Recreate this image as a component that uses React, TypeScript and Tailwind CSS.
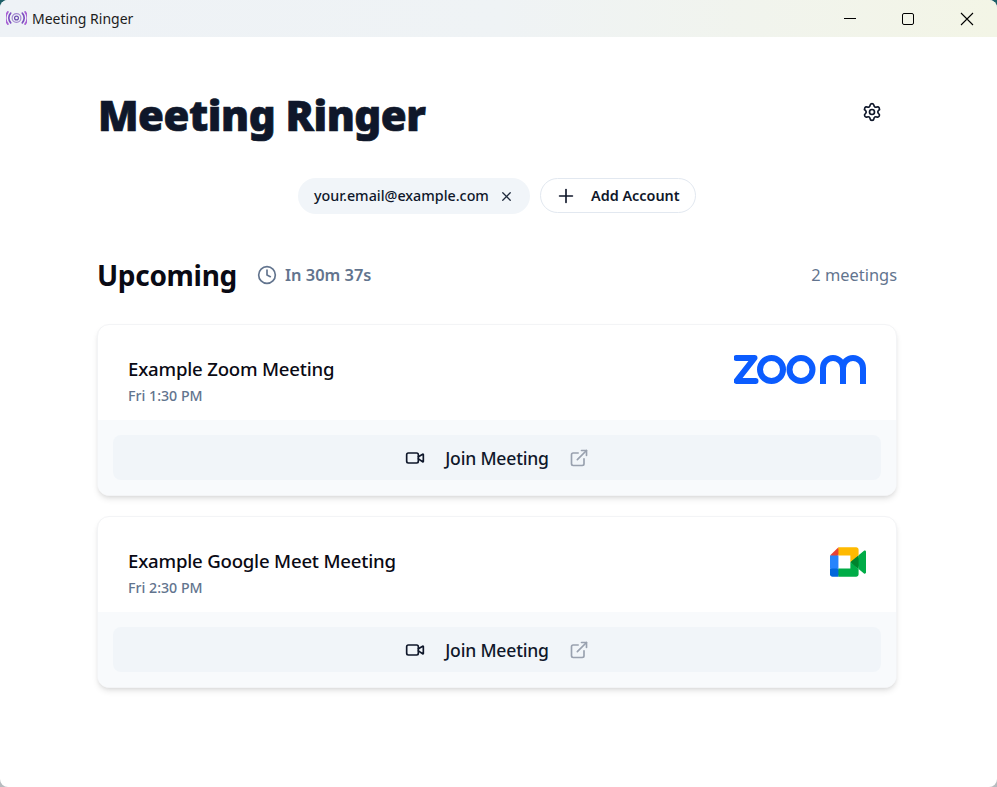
import React from 'react';
import { Clock, ExternalLink, Plus, Settings, Video, X } from 'lucide-react';

const font = { fontFamily: '"Noto Sans", "Open Sans", sans-serif' };

const AppIcon = () => (
  <svg width="21" height="14" viewBox="0 0 24 16" fill="none">
    <circle cx="12" cy="8" r="2.2" stroke="#6d4fb0" strokeWidth="1.4" />
    <circle cx="12" cy="8" r="5" stroke="#a48ad0" strokeWidth="1.4" />
    <path d="M5.4 2.5a8 8 0 0 0 0 11M18.6 2.5a8 8 0 0 1 0 11" stroke="#7d50c0" strokeWidth="1.9" strokeLinecap="round" />
    <path d="M2.2 1a11 11 0 0 0 0 14M21.8 1a11 11 0 0 1 0 14" stroke="#a860d4" strokeWidth="1.9" strokeLinecap="round" />
  </svg>
);

const ZoomLogo = () => (
  <svg width="133" height="30" viewBox="0 0 133 30" fill="none" stroke="#0b5cff" strokeWidth="6">
    <path d="M2.5 3h18L2.5 26h19" strokeLinejoin="round" strokeLinecap="round" />
    <circle cx="37.5" cy="14.5" r="11.5" />
    <circle cx="67" cy="14.5" r="11.5" />
    <path d="M89 29V13a10 10 0 0 1 20 0v16M109 13a10 10 0 0 1 20 0v16" />
  </svg>
);

const MeetLogo = () => (
  <svg width="36" height="30" viewBox="0 0 87.5 72" className="mr-[1px]">
    <path fill="#00832d" d="M49.5 36l8.53 9.75 11.47 7.33 2-17.02-2-16.64-11.69 6.44z" />
    <path fill="#0066da" d="M0 51.5V66c0 3.315 2.685 6 6 6h14.5l3-10.96-3-9.54-9.95-3z" />
    <path fill="#e94235" d="M20.5 0L0 20.5l10.55 3 9.95-3 2.95-9.41z" />
    <path fill="#2684fc" d="M20.5 20.5H0v31h20.5z" />
    <path fill="#00ac47" d="M82.6 8.68L69.5 19.42v33.66l13.16 10.79c1.97 1.54 4.85.135 4.85-2.37V11c0-2.535-2.945-3.925-4.91-2.32zM49.5 36v15.5h-29V72h43c3.315 0 6-2.685 6-6V53.08z" />
    <path fill="#ffba00" d="M63.5 0h-43v20.5h29V36l20-16.57V6c0-3.315-2.685-6-6-6z" />
  </svg>
);

const MeetingCard = ({ title, time, logo }: { title: string; time: string; logo: React.ReactNode }) => (
  <div className="rounded-xl border border-gray-100 bg-white shadow-md overflow-hidden">
    <div className="h-[95px] pl-[30px] pr-[29px] flex justify-between">
      <div className="pt-[30px]">
        <h3 className="text-[18.6px] leading-[28px] font-medium text-[#0a0a14] tracking-[-0.2px]">{title}</h3>
        <p className="mt-[3px] text-[14.2px] leading-5 font-medium text-slate-500">{time}</p>
      </div>
      <div className="pt-[30px]">{logo}</div>
    </div>
    <div className="bg-slate-50 p-[15px]">
      <button className="w-full h-[45px] rounded-lg bg-[#f1f5f9] flex items-center justify-center text-[#0f172a]">
        <Video size={20} strokeWidth={2} />
        <span className="mx-[20px] pt-[1px] text-[17.6px] font-medium tracking-[-0.2px]">Join Meeting</span>
        <ExternalLink size={20} className="text-gray-400" />
      </button>
    </div>
  </div>
);

export default function App() {
  return (
    <div className="w-full h-[787px] bg-gradient-to-b from-[#1d5f68] to-[#b8bcc0] overflow-hidden" style={font}>
      <div className="h-full rounded-lg bg-white text-[#0f172a] overflow-hidden">
        <div className="h-[37px] bg-gradient-to-r from-[#eef2f6] via-[#eff3f5] to-[#f3f5e6] flex items-center justify-between">
          <div className="flex items-center pl-[6px] gap-[5px]">
            <div className="mb-[2px]">
              <AppIcon />
            </div>
            <span className="text-sm text-[#1c1c1c]">Meeting Ringer</span>
          </div>
          <div className="flex h-full">
            <div className="w-[59px] flex items-center justify-center">
              <div className="w-[12px] h-px bg-black" />
            </div>
            <div className="w-[59px] flex items-center justify-center">
              <div className="w-[12px] h-[12px] border border-black rounded-[2px] mr-[1px]" />
            </div>
            <div className="w-[59px] flex items-center justify-center">
              <svg width="14" height="14" viewBox="0 0 14 14" stroke="#000" strokeWidth="1.1" className="mr-[1px]">
                <path d="M1 1l12 12M13 1L1 13" />
              </svg>
            </div>
          </div>
        </div>

        <div className="pl-[97px] pr-[100px]">
          <div className="h-[141px] flex justify-between pt-[50px]">
            <h1 className="ml-[1px] text-[42px] leading-[56px] font-black text-[#0f172a] tracking-[-0.5px] [-webkit-text-stroke:0.7px_#0f172a]">Meeting Ringer</h1>
            <button className="w-[50px] h-[50px] flex items-center justify-center text-[#0f172a]">
              <Settings size={20} />
            </button>
          </div>

          <div className="flex justify-center gap-[10px] h-[36px]">
            <div className="h-[36px] w-[232px] rounded-full bg-[#f1f5f9] flex items-center pl-[16px] gap-[10px]">
              <span className="text-[14.3px] font-medium">your.email@example.com</span>
              <X size={15} className="text-[#1e293b]" />
            </div>
            <button className="h-[35px] w-[156px] rounded-full border border-[#e2e8f0] bg-white flex items-center pl-[14px]">
              <Plus size={22} strokeWidth={1.8} />
              <span className="ml-[14px] text-[14.4px] font-semibold">Add Account</span>
            </button>
          </div>

          <div className="mt-[40px] h-[42px] flex items-center justify-between">
            <div className="flex items-center">
              <h2 className="text-[28px] leading-[42px] font-bold text-[#0a0a14] tracking-[-0.3px]">Upcoming</h2>
              <Clock size={20} className="ml-[20px] text-slate-500" />
              <span className="ml-[8px] text-[16.4px] font-semibold text-slate-500">In 30m 37s</span>
            </div>
            <span className="text-[16.4px] text-slate-500">2 meetings</span>
          </div>

          <div className="mt-[28px] flex flex-col gap-[20px]">
            <MeetingCard title="Example Zoom Meeting" time="Fri 1:30 PM" logo={<ZoomLogo />} />
            <MeetingCard title="Example Google Meet Meeting" time="Fri 2:30 PM" logo={<MeetLogo />} />
          </div>
        </div>
      </div>
    </div>
  );
}
